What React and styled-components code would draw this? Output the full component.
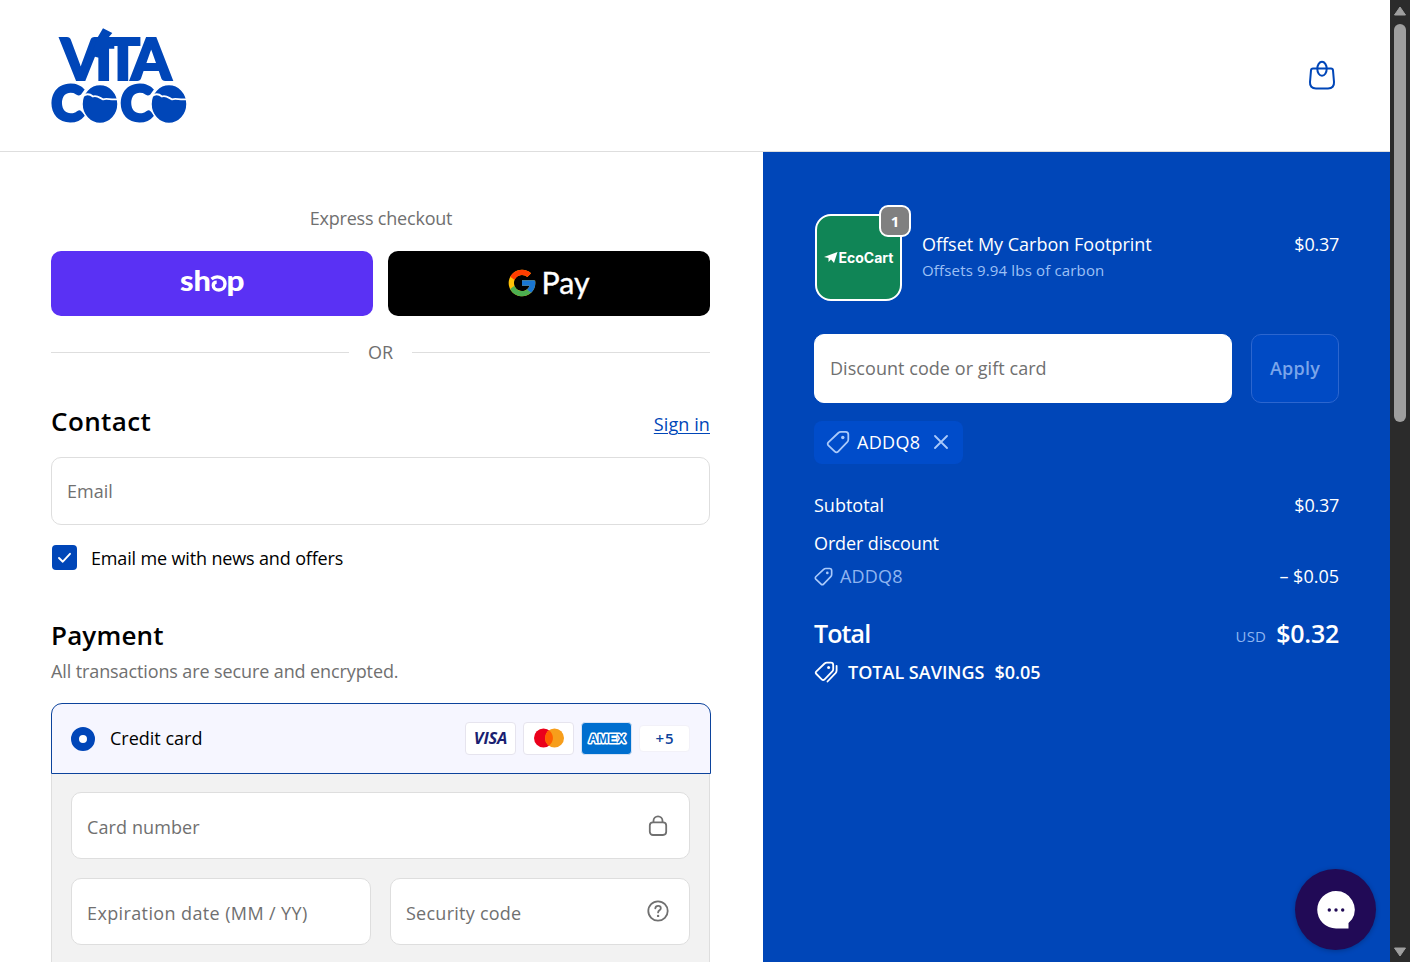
import React from "react";
import styled, { createGlobalStyle } from "styled-components";
import { FcGoogle } from "react-icons/fc";

const Global = createGlobalStyle`
  *, *::before, *::after { box-sizing: border-box; }
  body { margin: 0; font-family: "Open Sans", "Noto Sans", sans-serif; font-size: 18px; color: #000; overflow: hidden; }
`;

const Window = styled.div`
  display: grid;
  grid-template-columns: minmax(0, 1fr) 20px;
  width: 1410px;
  height: 962px;
  overflow: hidden;
  background: #fff;
`;
const Page = styled.div`
  position: relative;
  display: flex;
  flex-direction: column;
  height: 962px;
  overflow: hidden;
`;
const Header = styled.header`
  flex: none;
  display: flex;
  align-items: center;
  justify-content: space-between;
  height: 152px;
  padding: 0 54px 0 50px;
  border-bottom: 1px solid #dedede;
`;
const Columns = styled.div`
  flex: 1;
  min-height: 0;
  display: grid;
  grid-template-columns: 763px 1fr;
`;
const Main = styled.main`
  display: flex;
  flex-direction: column;
  padding: 51px 53px 0 51px;
`;
const Aside = styled.aside`
  display: flex;
  flex-direction: column;
  padding: 53px 51px 0;
  background: #0046b8;
  color: #fff;
`;

const Text = styled.span`
  display: inline-block;
  white-space: nowrap;
  line-height: ${(p) => p.$lh || 30}px;
  font-size: ${(p) => p.$size || 18}px;
  font-weight: ${(p) => p.$weight || 400};
  letter-spacing: ${(p) => p.$ls || 0}px;
  color: ${(p) => p.$color || "inherit"};
`;
const Heading = styled.h2`
  margin: 0;
  font-size: ${(p) => p.$size || 26}px;
  font-weight: 600;
  line-height: 36px;
  letter-spacing: ${(p) => p.$ls || 0}px;
`;
const ExpressTitle = styled.div`
  display: flex;
  justify-content: center;
  padding-left: 1px;
  color: #707070;
`;
const ExpressRow = styled.div`
  display: grid;
  grid-template-columns: 1fr 1fr;
  gap: 15px;
  margin-top: 18px;
`;
const PayButton = styled.button`
  display: flex;
  align-items: center;
  justify-content: center;
  height: 65px;
  padding: 0 0 ${(p) => p.$lift || 0}px;
  border: 0;
  border-radius: 10px;
  background: ${(p) => p.$bg};
  color: #fff;
`;
const Divider = styled.div`
  display: flex;
  align-items: center;
  gap: 19px;
  height: 30px;
  margin-top: 21px;
  color: #707070;
  &::before, &::after { content: ""; flex: 1; height: 1px; background: #dedede; }
`;
const SectionHead = styled.div`
  display: flex;
  align-items: center;
  justify-content: space-between;
  margin-top: 36px;
  margin-bottom: 18px;
`;
const Link = styled.a`
  color: #0046b8;
  text-decoration: underline;
  text-decoration-thickness: 1px;
  text-underline-offset: 2px;
  letter-spacing: 0.1px;
  line-height: 28px;
  padding-top: 6px;
`;
const Field = styled.div`
  display: flex;
  align-items: center;
  justify-content: space-between;
  height: ${(p) => p.$h || 67}px;
  padding: ${(p) => p.$pad || "2px 20px 0 15px"};
  border: 1px solid ${(p) => p.$line || "#dedede"};
  border-radius: 10px;
  background: #fff;
  color: #707070;
  svg { flex: none; margin-bottom: ${(p) => p.$lift || 0}px; }
`;
const CheckRow = styled.label`
  display: flex;
  align-items: center;
  gap: 14px;
  margin-top: 18px;
  padding-left: 1px;
`;
const Check = styled.span`
  display: flex;
  align-items: center;
  justify-content: center;
  width: 25px;
  height: 25px;
  margin-bottom: 2px;
  border-radius: 4px;
  background: #0046b8;
`;
const PaymentHead = styled.div`
  display: flex;
  flex-direction: column;
  margin-top: 44px;
`;
const PaymentBox = styled.section`
  flex: 1;
  display: flex;
  flex-direction: column;
  margin: 14px -1px 0 0;
`;
const MethodRow = styled.div`
  display: flex;
  align-items: center;
  height: 71px;
  padding: 0 20px 0 19px;
  border: 1px solid #0c439c;
  border-radius: 11px 11px 0 0;
  background: #f6f6ff;
`;
const MethodName = styled.span`
  line-height: 30px;
  padding-bottom: 2px;
`;
const Radio = styled.span`
  width: 24px;
  height: 24px;
  margin-right: 15px;
  border: 8px solid #0046b8;
  border-radius: 50%;
  background: #fff;
`;
const Brands = styled.div`
  display: flex;
  align-items: center;
  gap: 7px;
  margin-left: auto;
`;
const Brand = styled.div`
  display: flex;
  align-items: center;
  justify-content: center;
  width: 51px;
  height: ${(p) => p.$h || 33}px;
  padding-bottom: 1px;
  border: 1px solid ${(p) => p.$line || "#e6e4ee"};
  border-radius: 4px;
  background: ${(p) => p.$bg || "#fff"};
`;
const VisaMark = styled.span`
  font-size: 16.5px;
  font-style: italic;
  font-weight: 700;
  letter-spacing: -0.2px;
  line-height: 20px;
  color: #1a1f71;
`;
const More = styled.span`
  font-size: 15px;
  font-weight: 600;
  letter-spacing: 1px;
  color: #0c439c;
  padding-left: 1px;
`;
const CardForm = styled.div`
  flex: 1;
  display: flex;
  flex-direction: column;
  gap: 19px;
  margin-right: 1px;
  padding: 18px 19px 0;
  border: solid #dedede;
  border-width: 0 1px;
  background: #f2f2f2;
`;
const FieldPair = styled.div`
  display: grid;
  grid-template-columns: 1fr 1fr;
  gap: 19px;
`;

const Product = styled.div`
  display: flex;
  align-items: center;
  height: 105px;
  padding: 0 0 0 1px;
`;
const Thumb = styled.div`
  position: relative;
  display: flex;
  align-items: center;
  justify-content: center;
  width: 87px;
  height: 87px;
  border: 2px solid #fff;
  border-radius: 16px;
  background: #108556;
`;
const Badge = styled.span`
  position: absolute;
  top: -11px;
  right: -11px;
  width: 32px;
  height: 32px;
  border: 2px solid #fff;
  border-radius: 9px;
  background: #808080;
  font-size: 15px;
  font-weight: 700;
  line-height: 29px;
  text-align: center;
`;
const ProductInfo = styled.div`
  display: flex;
  flex-direction: column;
  margin: 0 0 2px 20px;
`;
const ProductPrice = styled.div`
  margin: 0 0 28px auto;
`;
const DiscountRow = styled.div`
  display: grid;
  grid-template-columns: 418px 88px;
  gap: 19px;
  margin-top: 24px;
`;
const Apply = styled.button`
  height: 69px;
  padding: 0 0 2px;
  border: 1px solid #2c66cf;
  border-radius: 10px;
  background: #004ac4;
  font: 600 18px/30px "Open Sans", sans-serif;
  letter-spacing: 0.2px;
  color: #7aa5ea;
`;
const Chip = styled.div`
  display: flex;
  align-items: center;
  gap: 7px;
  align-self: flex-start;
  width: 149px;
  height: 43px;
  margin-top: 18px;
  padding: 0 0 2px 12px;
  border-radius: 8px;
  background: #004cca;
  svg { flex: none; }
`;
const Row = styled.div`
  display: flex;
  align-items: center;
  justify-content: space-between;
  height: 30px;
  margin-top: ${(p) => p.$mt || 0}px;
`;
const Group = styled.div`
  display: flex;
  align-items: ${(p) => p.$align || "center"};
  gap: ${(p) => p.$gap || 0}px;
`;
const Chat = styled.button`
  position: absolute;
  right: 14px;
  bottom: 12px;
  display: flex;
  align-items: center;
  justify-content: center;
  width: 81px;
  height: 81px;
  padding: 0;
  border: 0;
  border-radius: 50%;
  background: #210a56;
  box-shadow: 0 1px 5px rgba(0, 0, 0, 0.25);
`;
const Track = styled.div`
  display: flex;
  flex-direction: column;
  align-items: center;
  height: 962px;
  padding: 6px 0 5px;
  background: #2b2b2b;
`;
const ScrollThumb = styled.div`
  width: 12px;
  height: 398px;
  margin: 8px 0 auto;
  border-radius: 6px;
  background: #9f9f9f;
`;

const Logo = () => (
  <svg width="140" height="100" viewBox="50 26 140 100" overflow="visible" fill="#0046b8" fontFamily="Lato" fontWeight="900">
    <text x="60.500 95 105.500 131" y="80" fontSize="57.500" stroke="#0046b8" strokeWidth="2">VITA</text>
    <path d="M103 28.300l9.300 4.700-4 4.800h6v11h-12l-3.500 9-7.500-2 5.500-17z" />
    <text x="51.300 88 120.500 157" y="121" fontSize="49" stroke="#0046b8" strokeWidth="3">
      C<tspan fontSize="30" dy="-7">O</tspan><tspan dy="7">C</tspan><tspan fontSize="30" dy="-7">O</tspan>
    </text>
    <g stroke="#fff" strokeWidth="1.500">
      <ellipse cx="100" cy="104" rx="18" ry="19.500" />
      <ellipse cx="169" cy="104" rx="18" ry="19.500" />
    </g>
    <g fill="none" stroke="#fff" strokeWidth="1.800">
      <path d="M83 96c4-3 7-2 10 .5 4-1.500 7 1.500 10 2.800 4-1.300 7 .6 14 0" />
      <path d="M152 96c4-3 7-2 10 .5 4-1.500 7 1.500 10 2.800 4-1.300 7 .6 14 0" />
    </g>
  </svg>
);
const Bag = () => (
  <svg width="28" height="32" viewBox="0 0 28 32" fill="none" stroke="#0046b8" strokeWidth="2">
    <path d="M5 8.500h18c1.200 0 1.900.6 2 1.800l1 11.700c.3 4-1.800 6.500-6 6.500H8c-4.200 0-6.300-2.500-6-6.500L3 10.300c.1-1.200.8-1.800 2-1.800z" />
    <ellipse cx="14" cy="8.800" rx="4.700" ry="7" />
  </svg>
);
const Tag = ({ size = 24, color = "#fff", double = false }) => (
  <svg width={size} height={size} viewBox="0 0 24 24" fill="none" stroke={color} strokeWidth={size < 22 ? 2.1 : 1.8} strokeLinecap="round" strokeLinejoin="round">
    {double ? (
      <>
        <path d="M2.400 11.300L10.600 3.500c.7-.6 1.300-.9 2.200-.9h4.100c1.500 0 2.300.8 2.300 2.300v4.300c0 .9-.3 1.500-.9 2.200l-7.700 7.900c-.9.9-2 .9-2.900 0L2.400 14c-.8-.8-.8-1.900 0-2.700z" />
        <path d="M22.600 5.800v4.400c0 1.300-.3 2-1.100 2.900L13.500 21.500" />
        <circle cx="14.600" cy="7.400" r="1.500" fill={color} stroke="none" />
      </>
    ) : (
      <>
        <path d="M2.300 12.300L12.200 3c.9-.8 1.500-1.100 2.700-1.100h4.800c1.700 0 2.600.9 2.600 2.600v4.900c0 1.200-.3 1.900-1.100 2.700L12.100 21.600c-1 1-2.200 1-3.200 0L2.300 15.300c-.8-.8-.8-2.200 0-3z" />
        <circle cx="16.800" cy="7.500" r="1.700" fill={color} stroke="none" />
      </>
    )}
  </svg>
);
const Lock = () => (
  <svg width="22" height="24" viewBox="0 0 22 24" fill="none" stroke="#707070" strokeWidth="1.800">
    <rect x="2.800" y="8.400" width="16.400" height="12.600" rx="3.200" />
    <path d="M6.500 8.200V6.800a4.500 4.500 0 0 1 9 0v1.400" />
  </svg>
);
const Help = () => (
  <svg width="22" height="22" viewBox="0 0 22 22" fill="none" stroke="#707070" strokeWidth="1.800" strokeLinecap="round">
    <circle cx="11" cy="11" r="9.700" />
    <path d="M8.300 8.400c.2-1.600 1.200-2.500 2.800-2.500s2.700.9 2.700 2.300c0 2.100-2.700 2-2.700 4.200" />
    <circle cx="11.100" cy="15.900" r="1.200" fill="#707070" stroke="none" />
  </svg>
);

export default function App() {
  return (
    <Window>
      <Global />
      <Page>
        <Header>
          <Logo />
          <Bag />
        </Header>
        <Columns>
          <Main>
            <ExpressTitle><Text $ls={-0.2}>Express checkout</Text></ExpressTitle>
            <ExpressRow>
              <PayButton $bg="#5a31f4" aria-label="Shop Pay">
                <svg width="66" height="44" viewBox="0 -5 66 44" fill="#fff" fontFamily="Lato" fontWeight="900" fontSize="28">
                  <text x="1" y="24.300" textLength="31" lengthAdjust="spacingAndGlyphs">sh</text>
                  <text x="47.500" y="24.300" textLength="18" lengthAdjust="spacingAndGlyphs">p</text>
                  <path d="M32.500 12C37.500 8 46 10 46 16.800c0 3.800-2.800 6.200-6 6.200-3.400 0-5.700-1.900-5.700-4.600 0-2 1.400-3.300 3.400-3.300" fill="none" stroke="#fff" strokeWidth="3.400" />
                </svg>
              </PayButton>
              <PayButton $bg="#000" $lift={2} aria-label="Google Pay">
                <FcGoogle size={32} />
                <svg width="54" height="42" viewBox="0 0 54 42" fill="#fff" fontFamily="Lato" fontSize="31">
                  <text x="3.500" y="31.500" textLength="48" lengthAdjust="spacingAndGlyphs" stroke="#fff" strokeWidth="0.400">Pay</text>
                </svg>
              </PayButton>
            </ExpressRow>
            <Divider><Text>OR</Text></Divider>
            <SectionHead>
              <Heading $ls={0.4}>Contact</Heading>
              <Link>Sign in</Link>
            </SectionHead>
            <Field $h={68} $pad="0 15px"><Text>Email</Text></Field>
            <CheckRow>
              <Check>
                <svg width="15" height="13" viewBox="0 0 15 13" fill="none" stroke="#fff" strokeWidth="1.900" strokeLinecap="round" strokeLinejoin="round"><path d="M2 7l3.800 3.700L13 2.800" /></svg>
              </Check>
              <Text $ls={-0.15}>Email me with news and offers</Text>
            </CheckRow>
            <PaymentHead>
              <Heading $ls={0.15}>Payment</Heading>
              <Text $color="#707070" $lh={36} $ls={-0.11}>All transactions are secure and encrypted.</Text>
            </PaymentHead>
            <PaymentBox>
              <MethodRow>
                <Radio />
                <MethodName>Credit card</MethodName>
                <Brands>
                  <Brand><VisaMark>VISA</VisaMark></Brand>
                  <Brand>
                    <svg width="32" height="20" viewBox="0 0 32 20"><circle cx="10.500" cy="10" r="9.500" fill="#eb001b" /><circle cx="21.500" cy="10" r="9.500" fill="#f79e1b" /><path d="M16 2.300a9.500 9.500 0 0 1 0 15.400 9.500 9.500 0 0 1 0-15.400z" fill="#ff5f00" /></svg>
                  </Brand>
                  <Brand $bg="#006fcf" $line="#d7e3f5">
                    <svg width="44" height="20" viewBox="0 0 44 20" fontFamily="Liberation Sans" fontWeight="700" fontSize="12.500">
                      <text x="3.500" y="14.500" textLength="37" lengthAdjust="spacingAndGlyphs" fill="#006fcf" stroke="#fff" strokeWidth="3" strokeLinejoin="round" paintOrder="stroke">AMEX</text>
                    </svg>
                  </Brand>
                  <Brand $h={27} $line="#f2f1f8"><More>+5</More></Brand>
                </Brands>
              </MethodRow>
              <CardForm>
                <Field $lift={1}><Text $ls={0.1}>Card number</Text><Lock /></Field>
                <FieldPair>
                  <Field><Text $ls={0.38}>Expiration date (MM / YY)</Text></Field>
                  <Field $lift={3}><Text $ls={0.25}>Security code</Text><Help /></Field>
                </FieldPair>
              </CardForm>
            </PaymentBox>
          </Main>
          <Aside>
            <Product>
              <Thumb>
                <svg width="72" height="22" viewBox="0 0 72 22" fill="#fff" fontFamily="Inter" fontWeight="700" fontSize="14">
                  <path d="M1 10L14.500 5 11 16l-3-3.500-2.500 2.500v-4z" />
                  <text x="15.500" y="15.500" textLength="55" lengthAdjust="spacingAndGlyphs">EcoCart</text>
                </svg>
                <Badge>1</Badge>
              </Thumb>
              <ProductInfo>
                <Text $lh={27}>Offset My Carbon Footprint</Text>
                <Text $lh={25} $size={15} $ls={0.16} $color="#9dc0f5">Offsets 9.94 lbs of carbon</Text>
              </ProductInfo>
              <ProductPrice><Text $ls={-0.25}>$0.37</Text></ProductPrice>
            </Product>
            <DiscountRow>
              <Field $h={69} $line="#fff" $pad="0 15px 2px"><Text $ls={0.05}>Discount code or gift card</Text></Field>
              <Apply>Apply</Apply>
            </DiscountRow>
            <Chip>
              <Tag color="#a9c9fa" />
              <Group $gap={14}>
                <Text $ls={0.3}>ADDQ8</Text>
                <svg width="14" height="14" viewBox="0 0 14 14" stroke="#a9c9fa" strokeWidth="1.800" strokeLinecap="round"><path d="M1 1l12 12M13 1L1 13" /></svg>
              </Group>
            </Chip>
            <Row $mt={26}><Text>Subtotal</Text><Text $ls={-0.25}>$0.37</Text></Row>
            <Row $mt={8}><Text $ls={-0.12}>Order discount</Text></Row>
            <Row $mt={3}>
              <Group $gap={7}><Tag size={19} color="#a9c9fa" /><Text $ls={0.2} $color="#8fb5f0">ADDQ8</Text></Group>
              <Text>– $0.05</Text>
            </Row>
            <Row $mt={27}>
              <Heading $size={25} $ls={-0.9}>Total</Heading>
              <Group $gap={10} $align="flex-end">
                <Text $size={15} $color="#8fb5f0" $ls={0.2} $lh={30}>USD</Text>
                <Heading as="strong" $size={25} $ls={-0.25}>$0.32</Heading>
              </Group>
            </Row>
            <Row $mt={9}>
              <Group $gap={10}>
                <Tag double />
                <Text $weight={600}>TOTAL SAVINGS</Text>
                <Text $weight={600}>$0.05</Text>
              </Group>
            </Row>
          </Aside>
        </Columns>
        <Chat aria-label="Chat">
          <svg width="38" height="38" viewBox="0 0 38 38"><path d="M19 0a18.700 18.700 0 0 1 16 28.300L31.500 32v5.500H19A18.700 18.700 0 0 1 19 0z" fill="#fff" /><g fill="#210a56"><circle cx="12.300" cy="19" r="1.700" /><circle cx="19" cy="19" r="1.700" /><circle cx="25.700" cy="19" r="1.700" /></g></svg>
        </Chat>
      </Page>
      <Track>
        <svg width="14" height="10" viewBox="0 0 14 10"><path d="M7 1l5.500 8h-11z" fill="#9f9f9f" stroke="#9f9f9f" strokeLinejoin="round" /></svg>
        <ScrollThumb />
        <svg width="14" height="11" viewBox="0 0 14 11"><path d="M7 10L1.500 2h11z" fill="#9f9f9f" stroke="#9f9f9f" strokeLinejoin="round" /></svg>
      </Track>
    </Window>
  );
}
